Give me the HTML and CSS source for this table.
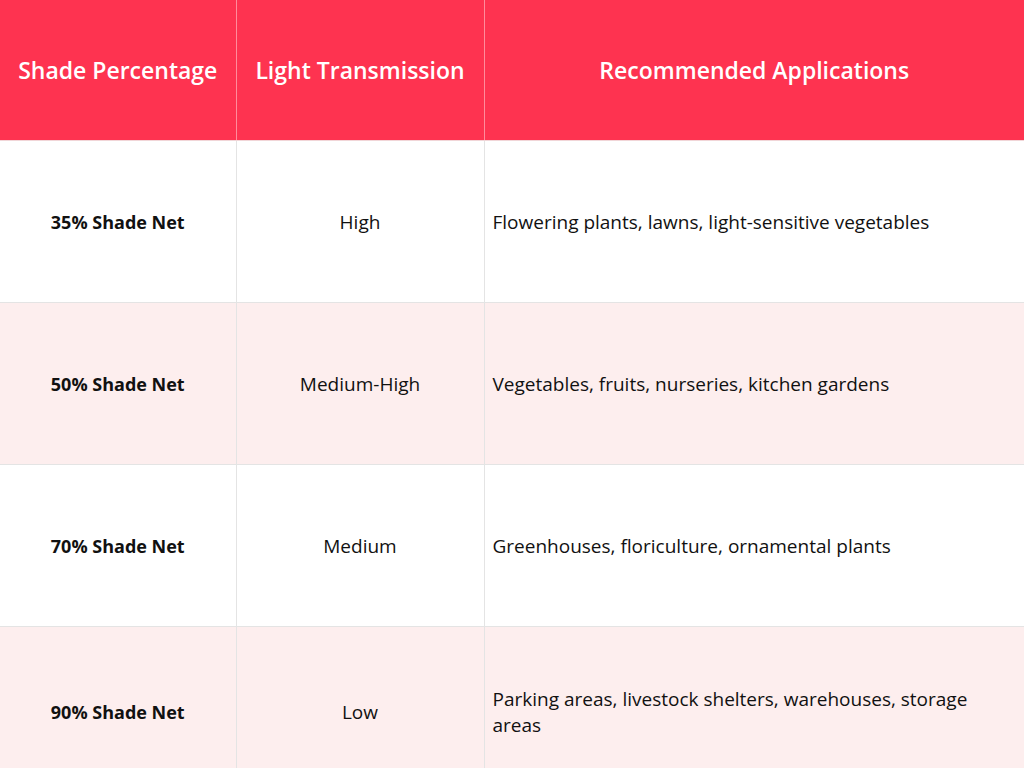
FILE: index.html
```html
<!DOCTYPE html>
<html>
<head>
<meta charset="utf-8">
<link rel="stylesheet" href="styles.css">
</head>
<body>
<table class="shade-table">
  <colgroup>
    <col class="c1"><col class="c2"><col class="c3">
  </colgroup>
  <thead>
    <tr>
      <th>Shade Percentage</th>
      <th>Light Transmission</th>
      <th>Recommended Applications</th>
    </tr>
  </thead>
  <tbody>
    <tr>
      <td class="name">35% Shade Net</td>
      <td class="mid">High</td>
      <td class="app">Flowering plants, lawns, light-sensitive vegetables</td>
    </tr>
    <tr class="alt">
      <td class="name">50% Shade Net</td>
      <td class="mid">Medium-High</td>
      <td class="app">Vegetables, fruits, nurseries, kitchen gardens</td>
    </tr>
    <tr>
      <td class="name">70% Shade Net</td>
      <td class="mid">Medium</td>
      <td class="app">Greenhouses, floriculture, ornamental plants</td>
    </tr>
    <tr class="alt last">
      <td class="name">90% Shade Net</td>
      <td class="mid">Low</td>
      <td class="app">Parking areas, livestock shelters, warehouses, storage areas</td>
    </tr>
  </tbody>
</table>
</body>
</html>
```
FILE: styles.css
```css
html, body {
  margin: 0;
  padding: 0;
  background: #ffffff;
}
body {
  font-family: "Open Sans", "Liberation Sans", sans-serif;
  color: #111111;
  overflow: hidden;
}
.shade-table {
  width: 1024px;
  border-collapse: collapse;
  table-layout: fixed;
}
.c1 { width: 236px; }
.c2 { width: 248px; }
.c3 { width: 540px; }
.shade-table th {
  background: #fe3350;
  color: #ffffff;
  font-weight: 600;
  font-size: 23px;
  height: 140px;
  padding: 0 8px;
  text-align: center;
  border-left: 1px solid #ff8c9b;
  border-bottom: 1px solid #f1d6d8;
}
.shade-table th:first-child { border-left: none; }
.shade-table td {
  height: 161px;
  padding: 0 8px;
  font-size: 19px;
  line-height: 26px;
  vertical-align: middle;
  border-left: 1px solid #e4e4e4;
  border-bottom: 1px solid #e4e4e4;
}
.shade-table td:first-child { border-left: none; }
.shade-table td.name {
  font-weight: 700;
  font-size: 18px;
  text-align: center;
}
.shade-table td.mid { text-align: center; }
.shade-table td.app { text-align: left; }
.shade-table tr.alt td { background: #fdeeee; }
.shade-table tr.last td { height: 170px; }
```
